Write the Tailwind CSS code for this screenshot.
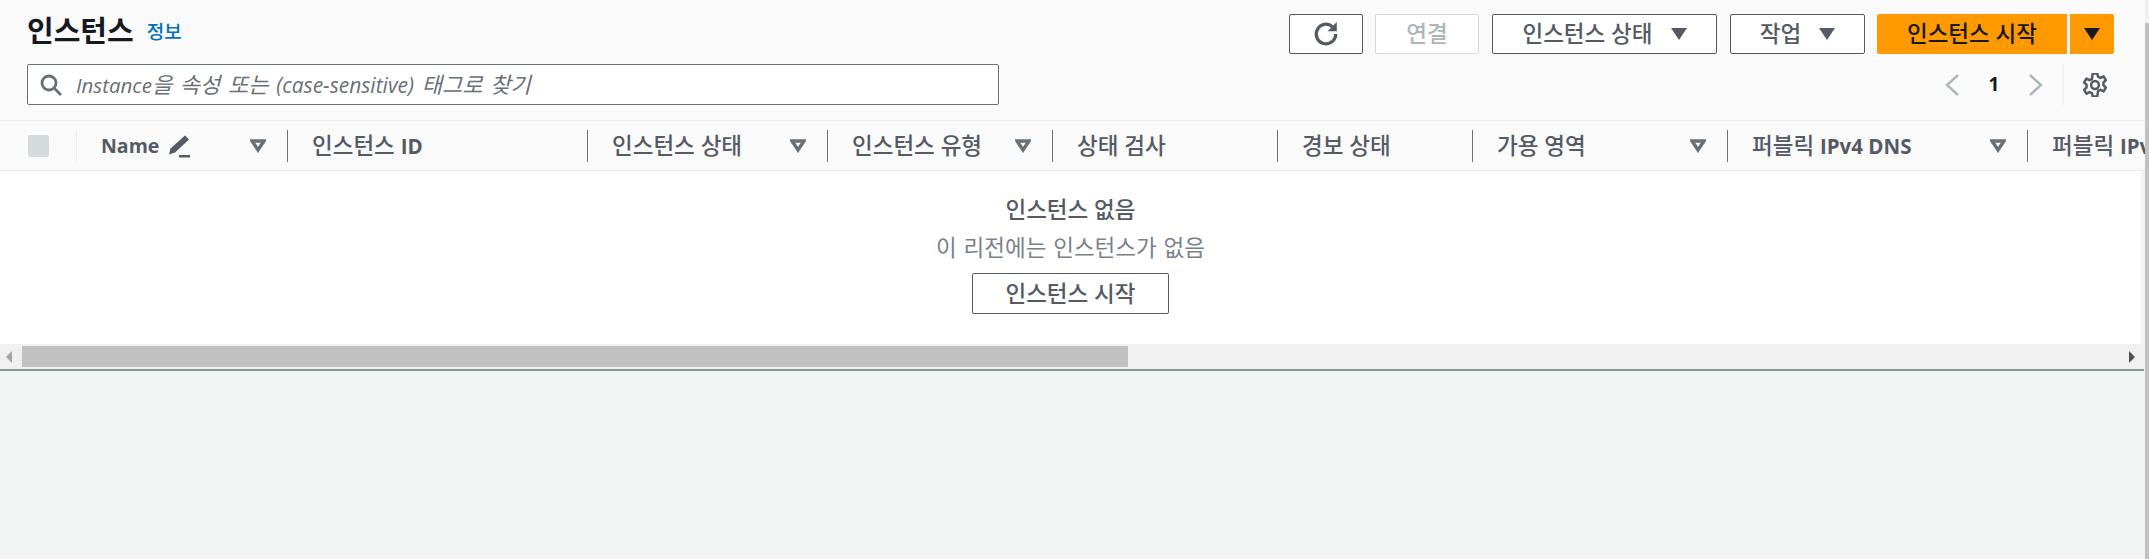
<!DOCTYPE html>
<html lang="ko">
<head>
  <meta charset="UTF-8">
  <meta name="viewport" content="width=device-width, initial-scale=1.0">
  <title>인스턴스</title>
  <script src="https://cdn.jsdelivr.net/npm/@tailwindcss/browser@4"></script>
</head>
<body class="bg-[#f2f3f3] text-[#545b64] font-['Open_Sans','Noto_Sans_CJK_KR',sans-serif] h-[559px] overflow-hidden">
  <div class="flex h-[559px]">
    <!-- Main -->
    <div class="w-[2145px] shrink-0">
      <!-- Top panel -->
      <section class="bg-[#fafafa] h-[120px] pl-[27px] pr-[31px] pt-[14px]">
        <div class="flex items-center justify-between h-10">
          <div class="flex items-center gap-[13px] -mt-[7px]">
            <h1 class="text-[29px] font-bold text-[#16191f] leading-8">인스턴스</h1>
            <a href="#" class="text-[19px] font-medium text-[#0073bb] leading-5 mt-[3px]">정보</a>
          </div>
          <div class="flex items-center text-[22.5px] font-medium leading-6">
            <button class="w-[74px] h-10 border border-[#545b64] rounded-[2px] bg-white flex items-center justify-center">
              <svg class="w-[26px] h-[26px]" viewBox="0 0 24 24" fill="none" stroke="#545b64" stroke-width="3"><path d="M21 12a9 9 0 1 1-3-6.700"/><path d="M22 1v8.500h-8.500z" fill="#545b64" stroke="none"/></svg>
            </button>
            <button class="ml-3 w-[104px] h-10 border border-[#d5dbdb] rounded-[2px] bg-white text-[#aab7b8]">연결</button>
            <button class="ml-[13px] w-[225px] h-10 border border-[#545b64] rounded-[2px] bg-white flex items-center justify-center gap-[18px]">
              <span>인스턴스 상태</span>
              <svg class="w-4 h-3" viewBox="0 0 16 12" fill="#545b64"><path d="M0 0h16L8 12z"/></svg>
            </button>
            <button class="ml-[13px] w-[135px] h-10 border border-[#545b64] rounded-[2px] bg-white flex items-center justify-center gap-[18px]">
              <span>작업</span>
              <svg class="w-4 h-3" viewBox="0 0 16 12" fill="#545b64"><path d="M0 0h16L8 12z"/></svg>
            </button>
            <button class="ml-3 w-[190px] h-10 rounded-l-[2px] bg-[#ff9900] text-[#16191f]">인스턴스 시작</button>
            <button class="ml-[3px] w-11 h-10 rounded-r-[2px] bg-[#ff9900] flex items-center justify-center">
              <svg class="w-4 h-3" viewBox="0 0 16 12" fill="#16191f"><path d="M0 0h16L8 12z"/></svg>
            </button>
          </div>
        </div>
        <div class="flex justify-between mt-[10px]">
          <div class="w-[972px] h-[41px] border border-[#687078] rounded-[2px] bg-white flex items-center pl-3 gap-[14px]">
            <svg class="w-[22px] h-[22px]" viewBox="0 0 22 22" fill="none" stroke="#687078" stroke-width="2.8"><circle cx="9" cy="9" r="7"/><path d="M14 14l7 7"/></svg>
            <span class="italic text-[22px] text-[#687078] leading-6 [word-spacing:2px]"><span class="text-[20.5px]">Instance</span>을 속성 또는 <span class="text-[21px]">(case-sensitive)</span> 태그로 찾기</span>
          </div>
          <div class="flex items-center h-[41px] pr-[7px]">
            <svg class="w-[14px] h-[22px]" viewBox="0 0 14 22" fill="none" stroke="#aab7b8" stroke-width="2.4"><path d="M13 1L2 11l11 10"/></svg>
            <span class="w-[70px] text-center text-[19px] font-bold text-[#16191f]">1</span>
            <svg class="w-[14px] h-[22px]" viewBox="0 0 14 22" fill="none" stroke="#aab7b8" stroke-width="2.4"><path d="M1 1l11 10L1 21"/></svg>
            <div class="ml-[20px] w-px h-[41px] bg-[#eaeded]"></div>
            <svg class="ml-[19px] w-6 h-6" viewBox="1.500 1.500 21 21" fill="none" stroke="#545b64" stroke-width="2.2" stroke-linejoin="round"><circle cx="12" cy="12" r="3.4"/><path d="M10 2h4l.7 2.800 2.200 1 2.600-1.400 2 3.400-2.100 2v2.400l2.100 2-2 3.400-2.600-1.400-2.200 1L14 22h-4l-.7-2.800-2.200-1-2.600 1.400-2-3.400 2.100-2v-2.400l-2.100-2 2-3.400 2.600 1.400 2.200-1z"/></svg>
          </div>
        </div>
      </section>

      <!-- Table header -->
      <div class="flex h-[51px] bg-[#fafafa] border-y border-[#eaeded] items-center overflow-hidden text-[22.5px] font-medium whitespace-nowrap">
        <div class="w-[77px] shrink-0 flex items-center pl-7 h-8 border-r border-[#eaeded]">
          <div class="w-[21px] h-[22px] bg-[#d5dbdb] rounded-[2px]"></div>
        </div>
        <div class="w-[211px] shrink-0 flex items-center h-8 pl-6 pr-[21px] border-r border-[#687078]">
          <span class="text-[19.5px] font-bold">Name</span>
          <svg class="ml-[8px] w-6 h-6" viewBox="0 0 24 24" fill="#545b64"><path d="M18 1.500l4 4L8 18.500l-6 2 1.500-6z"/><path d="M12 21h11v2.500H12z"/></svg>
          <svg class="ml-auto w-4 h-[14px]" viewBox="0 0 16 14" fill="none" stroke="#687078" stroke-width="3.4"><path d="M2 2h12L8 11z"/></svg>
        </div>
        <div class="w-[300px] shrink-0 flex items-center h-8 pl-6 border-r border-[#687078]"><span>인스턴스 <span class="text-[20.5px] font-bold">ID</span></span></div>
        <div class="w-[240px] shrink-0 flex items-center h-8 pl-6 pr-[21px] border-r border-[#687078]">
          <span>인스턴스 상태</span>
          <svg class="ml-auto w-4 h-[14px]" viewBox="0 0 16 14" fill="none" stroke="#687078" stroke-width="3.4"><path d="M2 2h12L8 11z"/></svg>
        </div>
        <div class="w-[225px] shrink-0 flex items-center h-8 pl-6 pr-[21px] border-r border-[#687078]">
          <span>인스턴스 유형</span>
          <svg class="ml-auto w-4 h-[14px]" viewBox="0 0 16 14" fill="none" stroke="#687078" stroke-width="3.4"><path d="M2 2h12L8 11z"/></svg>
        </div>
        <div class="w-[225px] shrink-0 flex items-center h-8 pl-6 border-r border-[#687078]"><span>상태 검사</span></div>
        <div class="w-[195px] shrink-0 flex items-center h-8 pl-6 border-r border-[#687078]"><span>경보 상태</span></div>
        <div class="w-[255px] shrink-0 flex items-center h-8 pl-6 pr-[21px] border-r border-[#687078]">
          <span>가용 영역</span>
          <svg class="ml-auto w-4 h-[14px]" viewBox="0 0 16 14" fill="none" stroke="#687078" stroke-width="3.4"><path d="M2 2h12L8 11z"/></svg>
        </div>
        <div class="w-[300px] shrink-0 flex items-center h-8 pl-6 pr-[21px] border-r border-[#687078]">
          <span>퍼블릭 <span class="text-[20.5px] font-bold">IPv4 DNS</span></span>
          <svg class="ml-auto w-4 h-[14px]" viewBox="0 0 16 14" fill="none" stroke="#687078" stroke-width="3.4"><path d="M2 2h12L8 11z"/></svg>
        </div>
        <div class="w-[300px] shrink-0 flex items-center h-8 pl-6"><span>퍼블릭 <span class="text-[20.5px] font-bold">IPv4</span> 주소</span></div>
      </div>

      <!-- Empty state -->
      <div class="bg-white h-[173px] w-[2141px] flex flex-col items-center pt-[25px]">
        <div class="text-[22.5px] font-medium leading-7">인스턴스 없음</div>
        <div class="text-[22.5px] text-[#79828a] leading-7 mt-[10px] [word-spacing:1px]">이 리전에는 인스턴스가 없음</div>
        <button class="mt-[11px] w-[197px] h-[41px] border border-[#545b64] rounded-[2px] bg-white text-[22.5px] font-medium">인스턴스 시작</button>
      </div>

      <!-- Horizontal scrollbar -->
      <div class="w-[2144px] h-[25px] bg-[#f0f0f0] flex items-center">
        <svg class="ml-[6px] w-[6px] h-3" viewBox="0 0 6 12" fill="#a3a3a3"><path d="M6 0v12L0 6z"/></svg>
        <div class="ml-[10px] w-[1106px] h-[21px] bg-[#c1c1c1]"></div>
        <svg class="ml-auto mr-[9px] w-[6px] h-3" viewBox="0 0 6 12" fill="#505050"><path d="M0 0v12l6-6z"/></svg>
      </div>
      <div class="w-[2144px] h-[2px] bg-[#879596]"></div>
    </div>

    <!-- Page scrollbar -->
    <div class="w-1 h-full bg-[#f1f1f1] pt-[23px]">
      <div class="w-1 h-[536px] bg-[#c1c1c1]"></div>
    </div>
  </div>
</body>
</html>
